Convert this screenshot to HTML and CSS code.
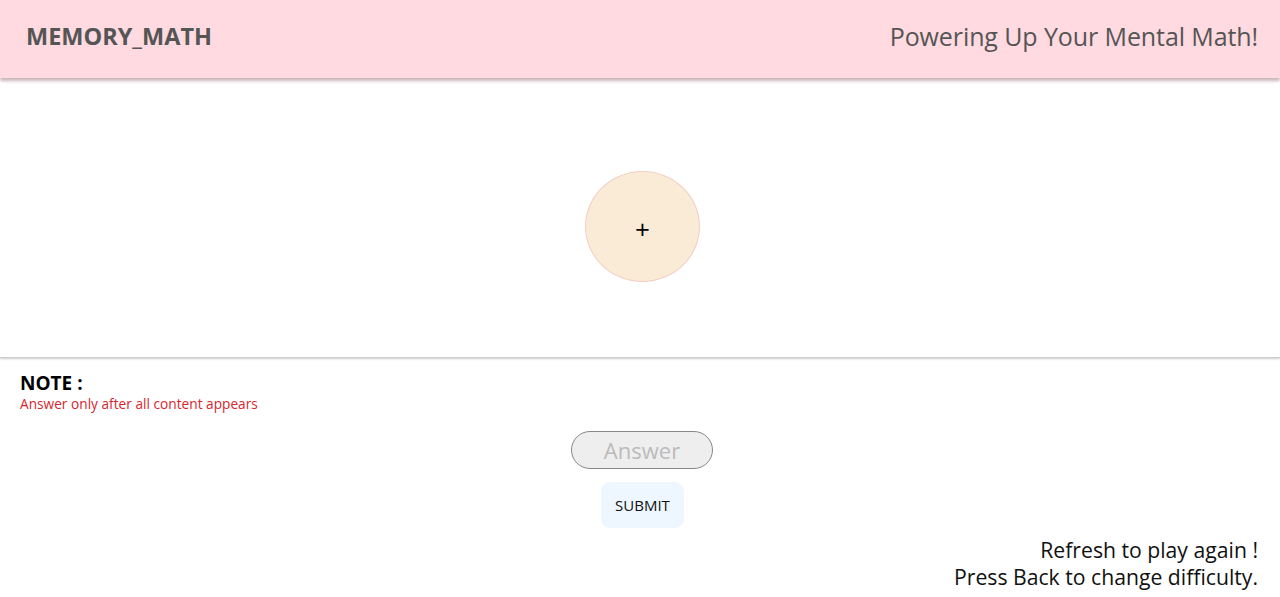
FILE: index.html
```html
<!DOCTYPE html>
<html lang="en">
<head>
<meta charset="utf-8">
<title>Memory Math</title>
<link rel="stylesheet" href="styles.css">
</head>
<body>
<header class="topbar">
  <div class="brand">MEMORY_MATH</div>
  <div class="tagline">Powering Up Your Mental Math!</div>
</header>
<main class="stage">
  <div class="bubble">+</div>
</main>
<section class="note">
  <div class="note-title">NOTE :</div>
  <div class="note-text">Answer only after all content appears</div>
</section>
<section class="answer-area">
  <input class="answer" type="text" placeholder="Answer">
  <button class="submit">SUBMIT</button>
</section>
<footer class="hints">
  <div>Refresh to play again !</div>
  <div>Press Back to change difficulty.</div>
</footer>
</body>
</html>
```
FILE: styles.css
```css
* { box-sizing: border-box; }
html, body { margin: 0; padding: 0; }
body {
  font-family: "Open Sans", "Noto Sans", sans-serif;
  background: #fff;
  color: #111;
  width: 1280px;
  height: 597px;
  overflow: hidden;
}
.topbar {
  height: 78px;
  background: #ffdae0;
  display: flex;
  align-items: center;
  justify-content: space-between;
  padding: 0 22px 6px 26px;
  box-shadow: 0 3px 3px rgba(160, 120, 125, 0.55);
  position: relative;
}
.brand {
  font-size: 23.5px;
  font-weight: 700;
  color: #555;
}
.tagline {
  font-size: 25px;
  color: #555;
  letter-spacing: -0.1px;
}
.stage {
  height: 280px;
  display: flex;
  align-items: center;
  justify-content: center;
  border-bottom: 1px solid #ccc;
  box-shadow: 0 1px 2px rgba(0,0,0,0.2);
}
.bubble {
  width: 115px;
  height: 111px;
  border-radius: 50%;
  background: #faebd7;
  border: 1px solid #f2cfc4;
  display: flex;
  align-items: center;
  justify-content: center;
  font-size: 26px;
  line-height: 1;
  color: #000;
  margin-top: 17px;
  margin-left: 5px;
  padding-top: 6px;
}
.note {
  padding: 13px 20px 0;
}
.note-title {
  font-size: 19px;
  font-weight: 700;
  line-height: 24px;
  color: #000;
}
.note-text {
  font-size: 13.7px;
  color: #d6262e;
  line-height: 17px;
}
.answer-area {
  display: flex;
  flex-direction: column;
  align-items: center;
  padding-top: 19px;
  gap: 13px;
}
.answer {
  width: 142px;
  height: 38px;
  border-radius: 19px;
  border: 1px solid #888;
  background: #eee;
  font-family: inherit;
  font-size: 22px;
  text-align: center;
  padding: 0;
  margin-left: 4px;
}
.answer::placeholder { color: #bbb; }
.submit {
  width: 83px;
  height: 46px;
  border: none;
  border-radius: 9px;
  background: #eef7ff;
  font-family: inherit;
  font-size: 15px;
  color: #111;
  margin-left: 5px;
}
.hints {
  text-align: right;
  padding: 8px 22px 0 0;
  font-size: 21.2px;
  line-height: 27px;
  color: #111;
}
```
